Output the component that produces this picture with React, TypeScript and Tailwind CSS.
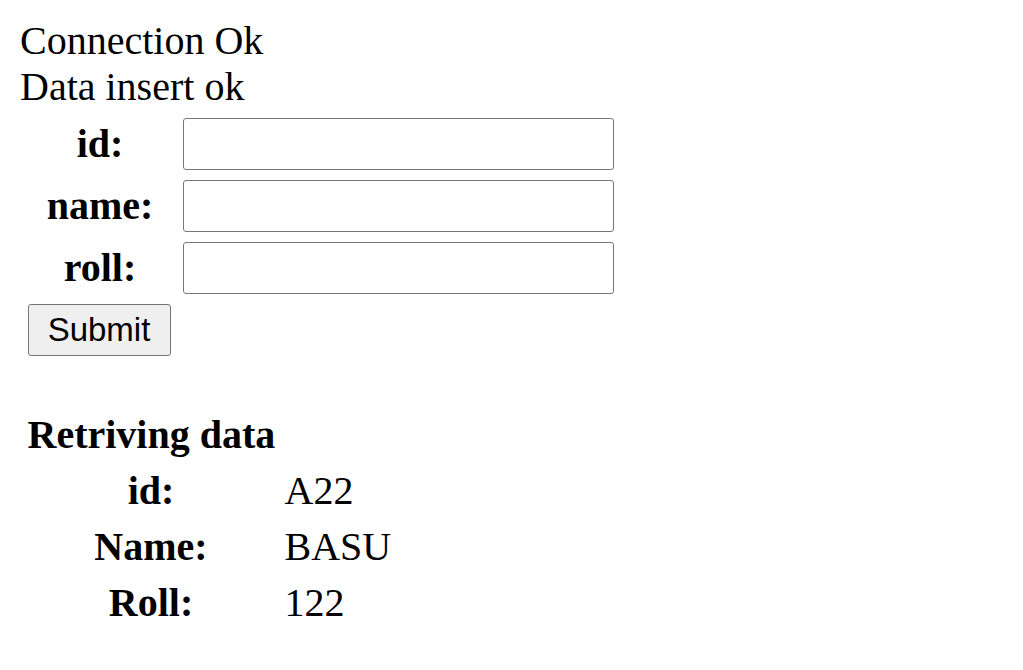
export default function App() {
  const fields = ["id:", "name:", "roll:"];
  const rows = [
    ["id:", "A22"],
    ["Name:", "BASU"],
    ["Roll:", "122"],
  ];

  return (
    <div className="min-h-screen bg-white px-5 pt-[18px] pb-5 font-['Liberation_Serif','Times_New_Roman',serif] text-[40px] leading-[46px] text-black">
      <div>Connection Ok</div>
      <div>Data insert ok</div>

      {/* insert form */}
      <div className="flex flex-col gap-[5px] p-[5px]">
        {fields.map((f) => (
          <div key={f} className="flex items-center gap-[5px]">
            <div className="w-[150px] p-[2.5px] text-center font-bold">{f}</div>
            <div className="p-[2.5px]">
              <input
                type="text"
                className="block h-[52px] w-[431px] rounded-[3px] border border-[#767676] bg-white px-2 font-['Liberation_Sans',Arial,sans-serif] text-[33px] outline-none"
              />
            </div>
          </div>
        ))}
        <div className="flex">
          <div className="p-[2.5px]">
            <button className="block h-[52px] w-[143px] rounded-[3px] border border-[#767676] bg-[#efefef] font-['Liberation_Sans',Arial,sans-serif] text-[33px] leading-none text-black">
              Submit
            </button>
          </div>
        </div>
      </div>

      {/* retrieved data */}
      <div className="mt-[41px] flex flex-col gap-[5px] p-[5px]">
        <div className="flex">
          <div className="w-[252px] whitespace-nowrap p-[2.5px] text-center font-bold">Retriving data</div>
        </div>
        {rows.map(([k, v]) => (
          <div key={k} className="flex gap-[5px]">
            <div className="w-[252px] whitespace-nowrap p-[2.5px] text-center font-bold">{k}</div>
            <div className="p-[2.5px]">{v}</div>
          </div>
        ))}
      </div>
    </div>
  );
}
